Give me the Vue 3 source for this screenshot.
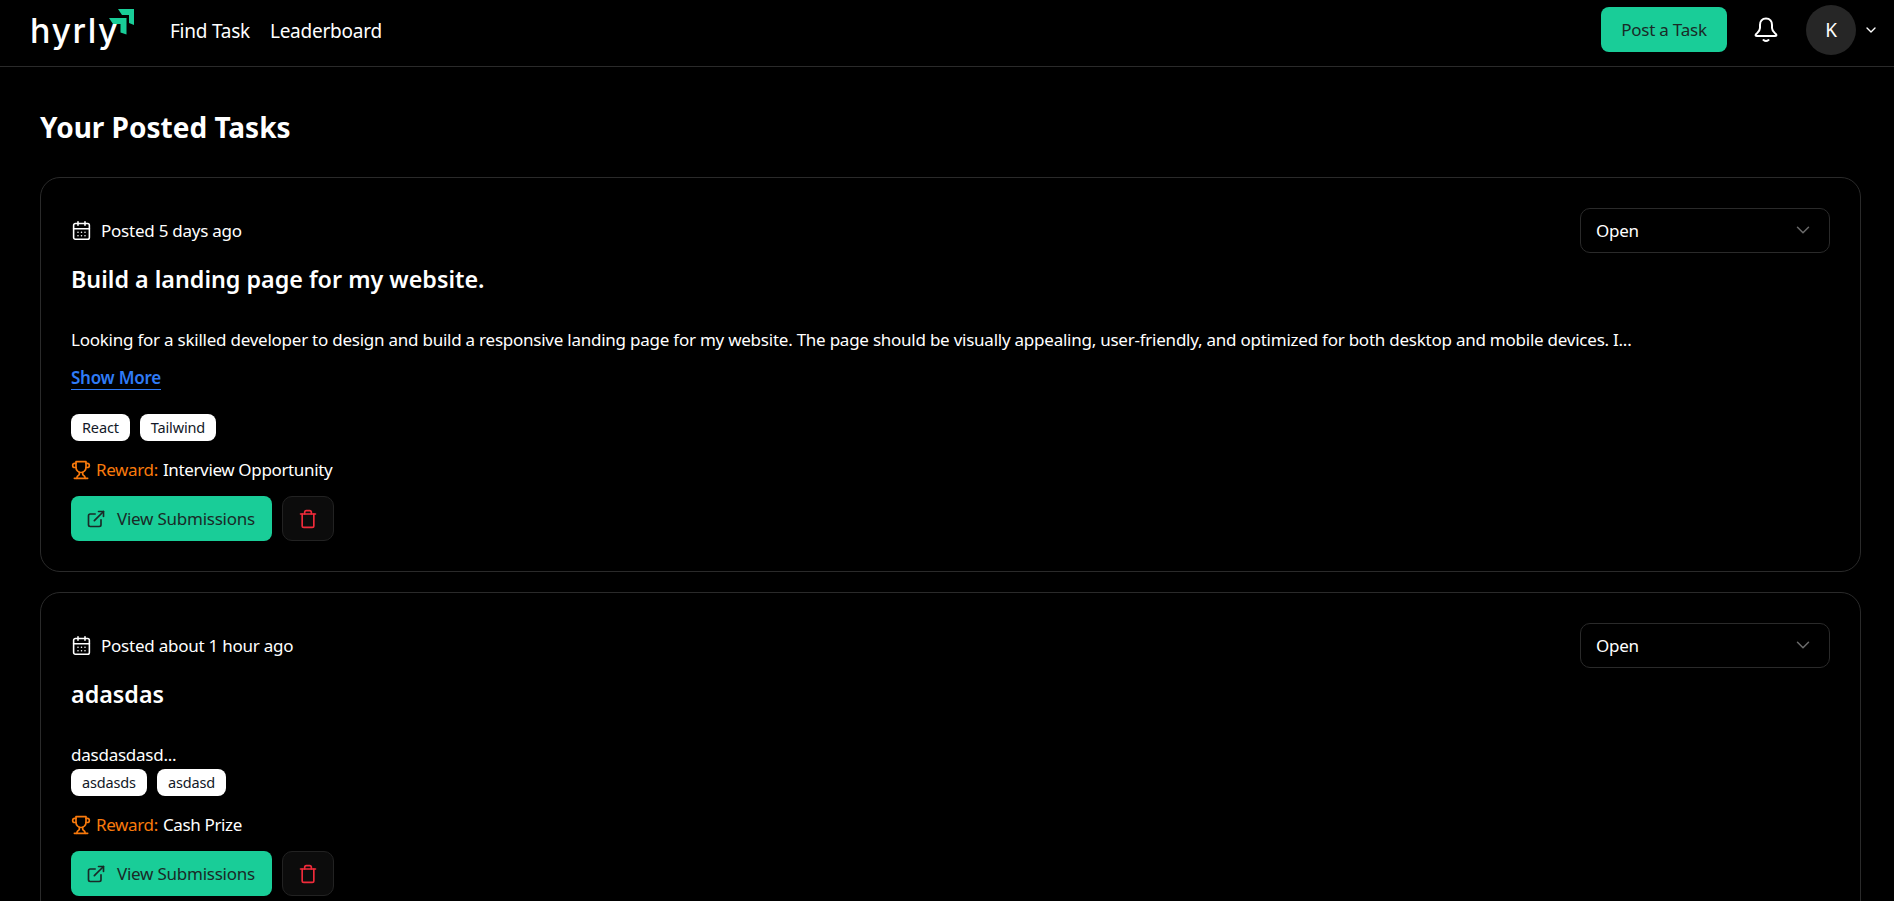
<script setup>
const tasks = [
  {
    posted: 'Posted 5 days ago',
    title: 'Build a landing page for my website.',
    desc: 'Looking for a skilled developer to design and build a responsive landing page for my website. The page should be visually appealing, user-friendly, and optimized for both desktop and mobile devices. I...',
    more: true,
    tags: ['React', 'Tailwind'],
    reward: 'Interview Opportunity',
  },
  {
    posted: 'Posted about 1 hour ago',
    title: 'adasdas',
    desc: 'dasdasdasd...',
    more: false,
    tags: ['asdasds', 'asdasd'],
    reward: 'Cash Prize',
  },
]
</script>

<template>
  <div class="page">
    <header class="nav">
      <div class="nav-left">
        <div class="logo">
          <span class="logo-text">hyrly</span>
          <svg class="logo-arrows" width="25" height="26" viewBox="0 0 25 26">
            <path d="M9 0h16v16l-5-2V6h-7z" fill="#19cd98" />
            <path d="M0 9h17.500v16.500l-6-2V15H4z" fill="#19cd98" />
          </svg>
        </div>
        <nav class="links">
          <a>Find Task</a>
          <a>Leaderboard</a>
        </nav>
      </div>
      <div class="nav-right">
        <button class="btn post">Post a Task</button>
        <svg class="bell" width="24" height="26" viewBox="0 0 24 26" fill="none" stroke="#fff" stroke-width="2" stroke-linecap="round" stroke-linejoin="round">
          <path d="M12 1.500C8 1.500 6 4.500 6 8v3c0 3-2.500 4.500-4.200 6.500Q1 19 3 19h18q2 0 1.200-1.500C20.500 15.500 18 14 18 11V8c0-3.500-2-6.500-6-6.500Z" />
          <path d="M9.500 23q2.500 2 5 0" />
        </svg>
        <div class="avatar">K</div>
        <svg class="caret" width="16" height="16" viewBox="0 0 24 24" fill="none" stroke="#fff" stroke-width="2" stroke-linecap="round" stroke-linejoin="round">
          <path d="m6 9 6 6 6-6" />
        </svg>
      </div>
    </header>

    <main class="main">
      <h1 class="heading">Your Posted Tasks</h1>
      <article v-for="t in tasks" :key="t.title" class="card">
        <div class="card-top">
          <div class="posted">
            <svg width="21" height="21" viewBox="0 0 24 24" fill="none" stroke="#fff" stroke-width="1.8" stroke-linecap="round" stroke-linejoin="round">
              <path d="M8 2v4M16 2v4" />
              <rect x="3" y="4" width="18" height="18" rx="2" />
              <path d="M3 10h18" />
              <path d="M8 14h.01M12 14h.01M16 14h.01M8 18h.01M12 18h.01M16 18h.01" />
            </svg>
            <span>{{ t.posted }}</span>
          </div>
          <div class="select">
            <span>Open</span>
            <svg class="select-caret" width="22" height="22" viewBox="0 0 24 24" fill="none" stroke="#6b6b6b" stroke-width="1.6" stroke-linecap="round" stroke-linejoin="round">
              <path d="m6 9 6 6 6-6" />
            </svg>
          </div>
        </div>
        <h2 class="title">{{ t.title }}</h2>
        <p class="desc">{{ t.desc }}</p>
        <a v-if="t.more" class="more">Show More</a>
        <div class="tags" :class="{ spaced: t.more }">
          <span v-for="tag in t.tags" :key="tag" class="tag">{{ tag }}</span>
        </div>
        <div class="reward">
          <svg width="20" height="20" viewBox="0 0 24 24" fill="none" stroke="#f97a0c" stroke-width="2" stroke-linecap="round" stroke-linejoin="round">
            <path d="M6 9H4.500a2.500 2.500 0 0 1 0-5H6" />
            <path d="M18 9h1.500a2.500 2.500 0 0 0 0-5H18" />
            <path d="M4 22h16" />
            <path d="M10 14.660V17c0 .55-.47.98-.97 1.210C7.850 18.750 7 20.240 7 22" />
            <path d="M14 14.660V17c0 .55.47.98.97 1.210C16.150 18.750 17 20.240 17 22" />
            <path d="M18 2H6v7a6 6 0 0 0 12 0V2Z" />
          </svg>
          <span class="reward-label">Reward:</span>
          <span>{{ t.reward }}</span>
        </div>
        <div class="actions">
          <button class="btn view">
            <svg width="20" height="20" viewBox="0 0 24 24" fill="none" stroke="#1a2a27" stroke-width="2" stroke-linecap="round" stroke-linejoin="round">
              <path d="M18 13v6a2 2 0 0 1-2 2H5a2 2 0 0 1-2-2V8a2 2 0 0 1 2-2h6" />
              <path d="M15 3h6v6" />
              <path d="M10 14 21 3" />
            </svg>
            View Submissions
          </button>
          <button class="trash">
            <svg width="20" height="20" viewBox="0 0 24 24" fill="none" stroke="#ef2b3a" stroke-width="2" stroke-linecap="round" stroke-linejoin="round">
              <path d="M3 6h18" />
              <path d="M19 6v14c0 1-1 2-2 2H7c-1 0-2-1-2-2V6" />
              <path d="M8 6V4c0-1 1-2 2-2h4c1 0 2 1 2 2v2" />
            </svg>
          </button>
        </div>
      </article>
    </main>
  </div>
</template>

<style>
html, body {
  margin: 0;
  background: #000;
  height: 100%;
  overflow: hidden;
}
</style>

<style scoped>
.page {
  min-height: 901px;
  background: #000;
  color: #fff;
  font-family: "Noto Sans", "Open Sans", sans-serif;
  font-size: 17px;
  letter-spacing: -0.24px;
}
.nav {
  height: 67px;
  box-sizing: border-box;
  border-bottom: 1px solid #2a2a2a;
  display: flex;
  align-items: center;
  justify-content: space-between;
  padding: 5px 15px 11px 30px;
}
.nav-left {
  display: flex;
  align-items: center;
  gap: 36px;
}
.logo {
  position: relative;
  width: 104px;
  height: 50px;
}
.logo-text {
  position: absolute;
  left: 0;
  top: 6px;
  font-family: "Inter", sans-serif;
  font-size: 34px;
  font-weight: 500;
  line-height: 40px;
  letter-spacing: 1.5px;
  color: #fff;
}
.logo-arrows {
  position: absolute;
  left: 79px;
  top: 4px;
}
.links {
  display: flex;
  gap: 20px;
  font-size: 19px;
  margin-top: 2px;
}
.nav-right {
  display: flex;
  align-items: center;
}
.btn {
  border: 0;
  background: #19cd98;
  color: #1a2a27;
  font: inherit;
  letter-spacing: inherit;
  border-radius: 8px;
  height: 45px;
}
.post {
  width: 126px;
  padding: 0;
  margin-top: -1px;
}
.bell {
  margin-left: 27px;
}
.avatar {
  margin-left: 28px;
  width: 50px;
  height: 50px;
  border-radius: 50%;
  background: #262626;
  display: flex;
  align-items: center;
  justify-content: center;
  font-size: 19px;
}
.caret {
  margin-left: 7px;
}
.main {
  padding: 40px 33px 0 40px;
}
.heading {
  margin: 0 0 30px;
  font-size: 28px;
  line-height: 40px;
  font-weight: 700;
  letter-spacing: 0;
}
.card {
  border: 1px solid #2a2a2a;
  border-radius: 20px;
  padding: 30px;
  margin-bottom: 20px;
}
.card-top {
  display: flex;
  justify-content: space-between;
  align-items: center;
}
.posted {
  display: flex;
  align-items: center;
  gap: 9px;
}
.select {
  width: 250px;
  height: 45px;
  box-sizing: border-box;
  border: 1px solid #2a2a2a;
  border-radius: 10px;
  padding: 0 15px;
  display: flex;
  align-items: center;
  justify-content: space-between;
}
.select-caret {
  margin-top: -2px;
}
.title {
  margin: 11px 0 0;
  font-size: 23.3px;
  line-height: 30px;
  font-weight: 600;
  letter-spacing: 0;
}
.desc {
  margin: 32px 0 0;
  line-height: 28px;
}
.more {
  display: inline-block;
  margin-top: 13px;
  color: #2f7bf6;
  font-weight: 600;
  line-height: 22px;
  border-bottom: 1px solid #2f7bf6;
}
.tags {
  display: flex;
  gap: 10px;
}
.tags.spaced {
  margin-top: 24px;
}
.tag {
  background: #fff;
  color: #111827;
  border-radius: 8px;
  height: 27px;
  line-height: 27px;
  padding: 0 11px;
  font-size: 14.5px;
  letter-spacing: -0.15px;
}
.reward {
  margin-top: 16px;
  display: flex;
  align-items: center;
  gap: 5px;
  line-height: 26px;
  letter-spacing: -0.36px;
}
.reward-label {
  color: #f97a0c;
}
.actions {
  margin-top: 13px;
  display: flex;
  gap: 10px;
}
.view {
  width: 201px;
  display: flex;
  align-items: center;
  gap: 11px;
  padding: 0 0 0 15px;
}
.trash {
  width: 52px;
  height: 45px;
  border: 1px solid #222;
  border-radius: 10px;
  background: #0c0c0c;
  padding: 0;
  display: flex;
  align-items: center;
  justify-content: center;
}
</style>
